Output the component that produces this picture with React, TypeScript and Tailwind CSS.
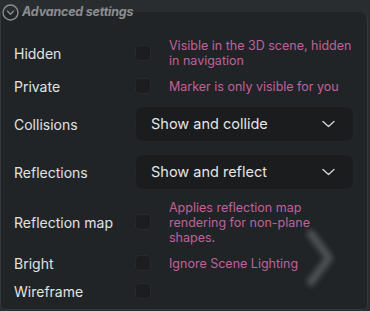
import React from "react";

const font = { fontFamily: "Inter, 'Noto Sans', sans-serif" };

function Checkbox() {
  return <div className="w-4 h-4 shrink-0 rounded-[4px] bg-[#1b1d1f] border border-[#27292c]" />;
}

function Chevron() {
  return (
    <svg width="13" height="8" viewBox="0 0 13 8" fill="none" className="shrink-0">
      <path d="M1 1.5 L6.5 6.5 L12 1.5" stroke="#d8d8d8" strokeWidth="1.3" strokeLinecap="round" strokeLinejoin="round" />
    </svg>
  );
}

function CheckRow({ label, desc, h }: { label: string; desc?: React.ReactNode; h: string }) {
  return (
    <div className={`flex items-center ${h}`}>
      <div className="w-[121px] shrink-0 text-[14px] text-[#e2e2e2]">{label}</div>
      <Checkbox />
      {desc && <div className="ml-[18px] w-[190px] text-[12.5px] leading-[15px] text-[#c0619a]">{desc}</div>}
    </div>
  );
}

function SelectRow({ label, value }: { label: string; value: string }) {
  return (
    <div className="flex items-center h-9">
      <div className="w-[121px] shrink-0 text-[14px] text-[#e2e2e2]">{label}</div>
      <div className="w-[219px] h-9 rounded-lg bg-[#1a1c1e] border border-[#232629] flex items-center justify-between pl-[15px] pr-[18px]">
        <span className="text-[14.5px] text-[#e6e6e6]">{value}</span>
        <Chevron />
      </div>
    </div>
  );
}

export default function App() {
  return (
    <div className="relative w-[370px] h-[311px] bg-[#2a2d30] overflow-hidden" style={font}>
      <div className="absolute left-[2px] top-[3px] flex items-center gap-[3px] z-10">
        <svg width="17" height="17" viewBox="0 0 17 17" fill="none">
          <circle cx="8.5" cy="8.5" r="7.5" stroke="#8a8d90" strokeWidth="1.4" />
          <path d="M5.5 7.2 L8.5 10.2 L11.5 7.2" stroke="#8a8d90" strokeWidth="1.4" strokeLinecap="round" strokeLinejoin="round" />
        </svg>
        <span className="text-[12.5px] font-bold italic text-[#8a8d90] tracking-[-0.2px]">Advanced settings</span>
      </div>
      <div className="mt-[12px] w-[368px] h-[298px] bg-[#212427] border-l border-r border-b border-[#35383b] rounded-tr-lg rounded-b-[5px] pl-[13px] pt-[28px] relative">
        <div className="flex flex-col">
          <CheckRow label="Hidden" h="h-[26px]" desc={<>Visible in the 3D scene, hidden in navigation</>} />
          <div className="h-[12px]" />
          <CheckRow label="Private" h="h-[16px]" desc="Marker is only visible for you" />
          <div className="h-[12px]" />
          <SelectRow label="Collisions" value="Show and collide" />
          <div className="h-[12px]" />
          <SelectRow label="Reflections" value="Show and reflect" />
          <div className="h-[24px]" />
          <CheckRow label="Reflection map" h="h-[16px]" desc="Applies reflection map rendering for non-plane shapes." />
          <div className="h-[25px]" />
          <CheckRow label="Bright" h="h-[16px]" desc="Ignore Scene Lighting" />
          <div className="h-[12px]" />
          <CheckRow label="Wireframe" h="h-[16px]" />
        </div>
        <svg className="absolute left-[296px] top-[212px]" width="50" height="70" viewBox="0 0 50 70" fill="none">
          <defs>
            <filter id="blur" x="-50%" y="-50%" width="200%" height="200%">
              <feGaussianBlur stdDeviation="2.5" />
            </filter>
          </defs>
          <path d="M14 10 L32 34 L14 58" stroke="#4c4f52" strokeWidth="8" strokeLinecap="round" strokeLinejoin="round" filter="url(#blur)" />
        </svg>
      </div>
    </div>
  );
}
